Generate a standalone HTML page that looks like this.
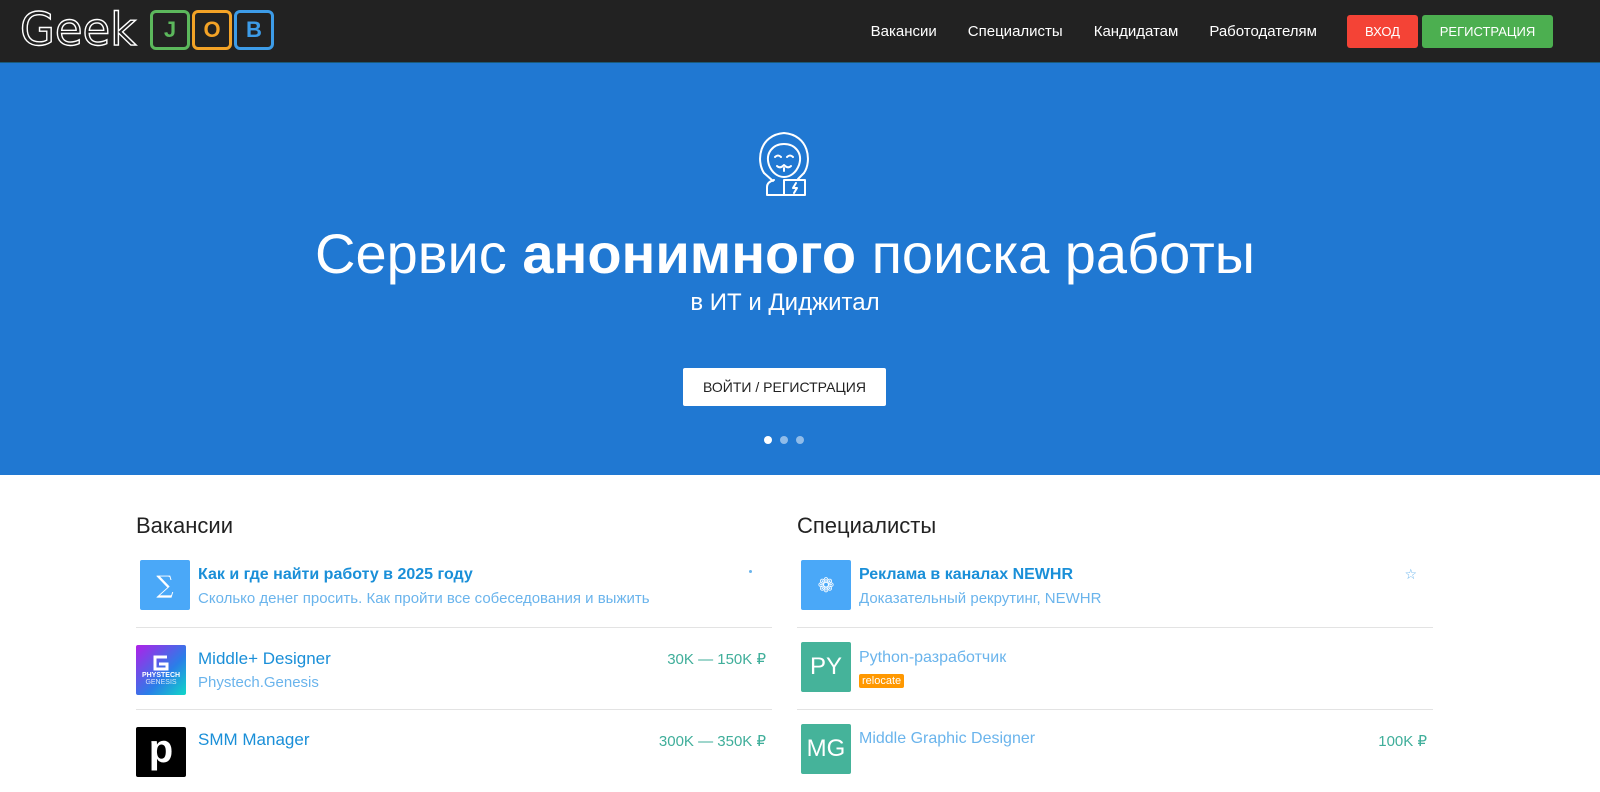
<!DOCTYPE html>
<html><head><meta charset="utf-8"><style>
*{box-sizing:border-box;margin:0;padding:0}
body{width:1600px;height:763px;overflow:hidden;font-family:"Liberation Sans","DejaVu Sans",sans-serif;background:#fff}
.top{height:63px;background:#222;position:relative;border-bottom:1px solid #1a5a7a}
.logo{position:absolute;left:20px;top:10px;display:flex;align-items:center}
.logo .g{font-family:"DejaVu Sans",sans-serif;color:#222;font-size:45px;-webkit-text-stroke:1.4px #fff;line-height:40px;width:130px}
.box{width:40px;height:40px;border:3px solid;border-radius:6px;margin-right:2px;display:flex;align-items:center;justify-content:center;font-size:22px;font-weight:bold}
nav{position:absolute;right:0;top:0;height:63px;display:flex;align-items:center}
nav a{color:#fff;font-size:15px;margin-right:31px;text-decoration:none}
.btn{height:33px;display:flex;align-items:center;justify-content:center;color:#fff;font-size:13px;border-radius:3px}
.hero{position:absolute;top:63px;left:0;width:1600px;height:412px;background:#2078d2}
.h1{position:absolute;top:158px;width:1570px;text-align:center;color:#fff;font-size:56px;font-weight:300}
.h2{position:absolute;top:226px;width:1570px;text-align:center;color:#fff;font-size:24px}
.cta{position:absolute;left:683px;top:305px;width:203px;height:38px;background:#fff;border-radius:2px;color:#222;font-size:14px;display:flex;align-items:center;justify-content:center}
.dots{position:absolute;top:373px;left:764px;display:flex;gap:8px}
.dots i{width:8px;height:8px;border-radius:50%;background:rgba(255,255,255,.5)}
.col{position:absolute;top:475px}
.ttl{font-size:22px;color:#222;position:absolute;top:38px}
.item{position:absolute;height:82px;border-bottom:1px solid #e3e3e3}
.av{position:absolute;width:50px;height:50px;border-radius:2px;display:flex;align-items:center;justify-content:center;color:#fff;font-size:24px}
.t{position:absolute;left:62px;font-size:16px;color:#1a8fd8;white-space:nowrap}
.s{position:absolute;left:62px;font-size:15px;color:#6ab4ec;white-space:nowrap}
.p{position:absolute;right:6px;font-size:15px;color:#3fae9a}
</style></head><body>
<div class="top">
 <div class="logo"><span class="g">Geek</span>
  <div class="box" style="border-color:#5cb85c;color:#5cb85c">J</div>
  <div class="box" style="border-color:#f4a326;color:#f4a326">O</div>
  <div class="box" style="border-color:#3d9ce8;color:#3d9ce8">B</div></div>
 <nav><a>Вакансии</a><a>Специалисты</a><a>Кандидатам</a><a style="margin-right:30px">Работодателям</a>
  <div class="btn" style="width:71px;background:#f44336;margin-right:4px">ВХОД</div>
  <div class="btn" style="width:131px;background:#4caf50;margin-right:47px">РЕГИСТРАЦИЯ</div></nav>
</div>
<div class="hero">
 <svg style="position:absolute;left:754px;top:66px" width="60" height="70" viewBox="0 0 60 70" fill="none" stroke="#fff" stroke-width="2" stroke-linecap="round" stroke-linejoin="round">
  <path d="M10 44 C2 32 5 6 30 4 C55 6 58 32 50 44"/>
  <path d="M15 36 C11 24 19 15 30 15 C41 15 49 24 45 36 C42 44 36 48 30 48 C24 48 18 44 15 36Z"/>
  <path d="M21 28 q3-3 6 0 M33 28 q3-3 6 0 M23 37 q3 3 7 -1 q4 4 7 1 M30 39 v3"/>
  <path d="M10 44 l9 8 M50 44 l-6 6 M13 66 v-8 q0-5 7-7 M13 66 h38 v-15 h-21 v15 M42 54 l-3 5 h4 l-3 5"/>
 </svg>
 <div class="h1">Сервис <b style="font-weight:bold">анонимного</b> поиска работы</div>
 <div class="h2">в ИТ и Диджитал</div>
 <div class="cta">ВОЙТИ / РЕГИСТРАЦИЯ</div>
 <div class="dots"><i style="background:#fff"></i><i></i><i></i></div>
</div>
<div class="col" style="left:136px;width:636px">
 <div class="ttl">Вакансии</div>
 <div class="item" style="top:71px;width:636px">
  <div class="av" style="left:4px;top:14px;background:#4aa8f8;font-family:'DejaVu Serif',serif;font-weight:200">∑</div>
  <div class="t" style="top:20px;font-weight:bold">Как и где найти работу в 2025 году</div>
  <div class="s" style="top:44px">Сколько денег просить. Как пройти все собеседования и выжить</div>
  <div style="position:absolute;right:20px;top:24px;width:3px;height:3px;background:#6ab4ec;border-radius:50%"></div>
 </div>
 <div class="item" style="top:153px;width:636px">
  <div class="av" style="left:0;top:17px;background:linear-gradient(135deg,#b020e8,#2a7ee8 60%,#10d8c8);font-size:7px;flex-direction:column;font-weight:bold">
   <svg width="18" height="18" viewBox="0 0 18 18" fill="none" stroke="#fff" stroke-width="3"><path d="M15 3H3v12h12v-5H7"/></svg>PHYSTECH<span style="font-weight:normal;opacity:.8">GENESIS</span></div>
  <div class="t" style="top:21px;font-size:17px">Middle+ Designer</div>
  <div class="s" style="top:46px">Phystech.Genesis</div>
  <div class="p" style="top:22px">30K — 150K ₽</div>
 </div>
 <div class="item" style="top:235px;width:636px;border:0">
  <div class="av" style="left:0;top:17px;background:#000;font-size:40px;font-weight:bold;align-items:flex-start">p</div>
  <div class="t" style="top:20px;font-size:17px">SMM Manager</div>
  <div class="p" style="top:22px">300K — 350K ₽</div>
 </div>
</div>
<div class="col" style="left:797px;width:636px">
 <div class="ttl">Специалисты</div>
 <div class="item" style="top:71px;width:636px">
  <div class="av" style="left:4px;top:14px;background:#4aa8f8;font-size:20px">❁</div>
  <div class="t" style="top:20px;font-weight:bold">Реклама в каналах NEWHR</div>
  <div class="s" style="top:44px">Доказательный рекрутинг, NEWHR</div>
  <div style="position:absolute;right:16px;top:20px;color:#6ab4ec;font-size:14px">☆</div>
 </div>
 <div class="item" style="top:153px;width:636px">
  <div class="av" style="left:4px;top:14px;background:#45b39a">PY</div>
  <div class="s" style="top:21px;font-size:16px">Python-разработчик</div>
  <div style="position:absolute;left:62px;top:46px;background:#ff9800;color:#fff;font-size:11px;padding:1px 3px;border-radius:2px">relocate</div>
 </div>
 <div class="item" style="top:235px;width:636px;border:0">
  <div class="av" style="left:4px;top:14px;background:#45b39a">MG</div>
  <div class="s" style="top:20px;font-size:16px">Middle Graphic Designer</div>
  <div class="p" style="top:22px">100K ₽</div>
 </div>
</div>
</body></html>
